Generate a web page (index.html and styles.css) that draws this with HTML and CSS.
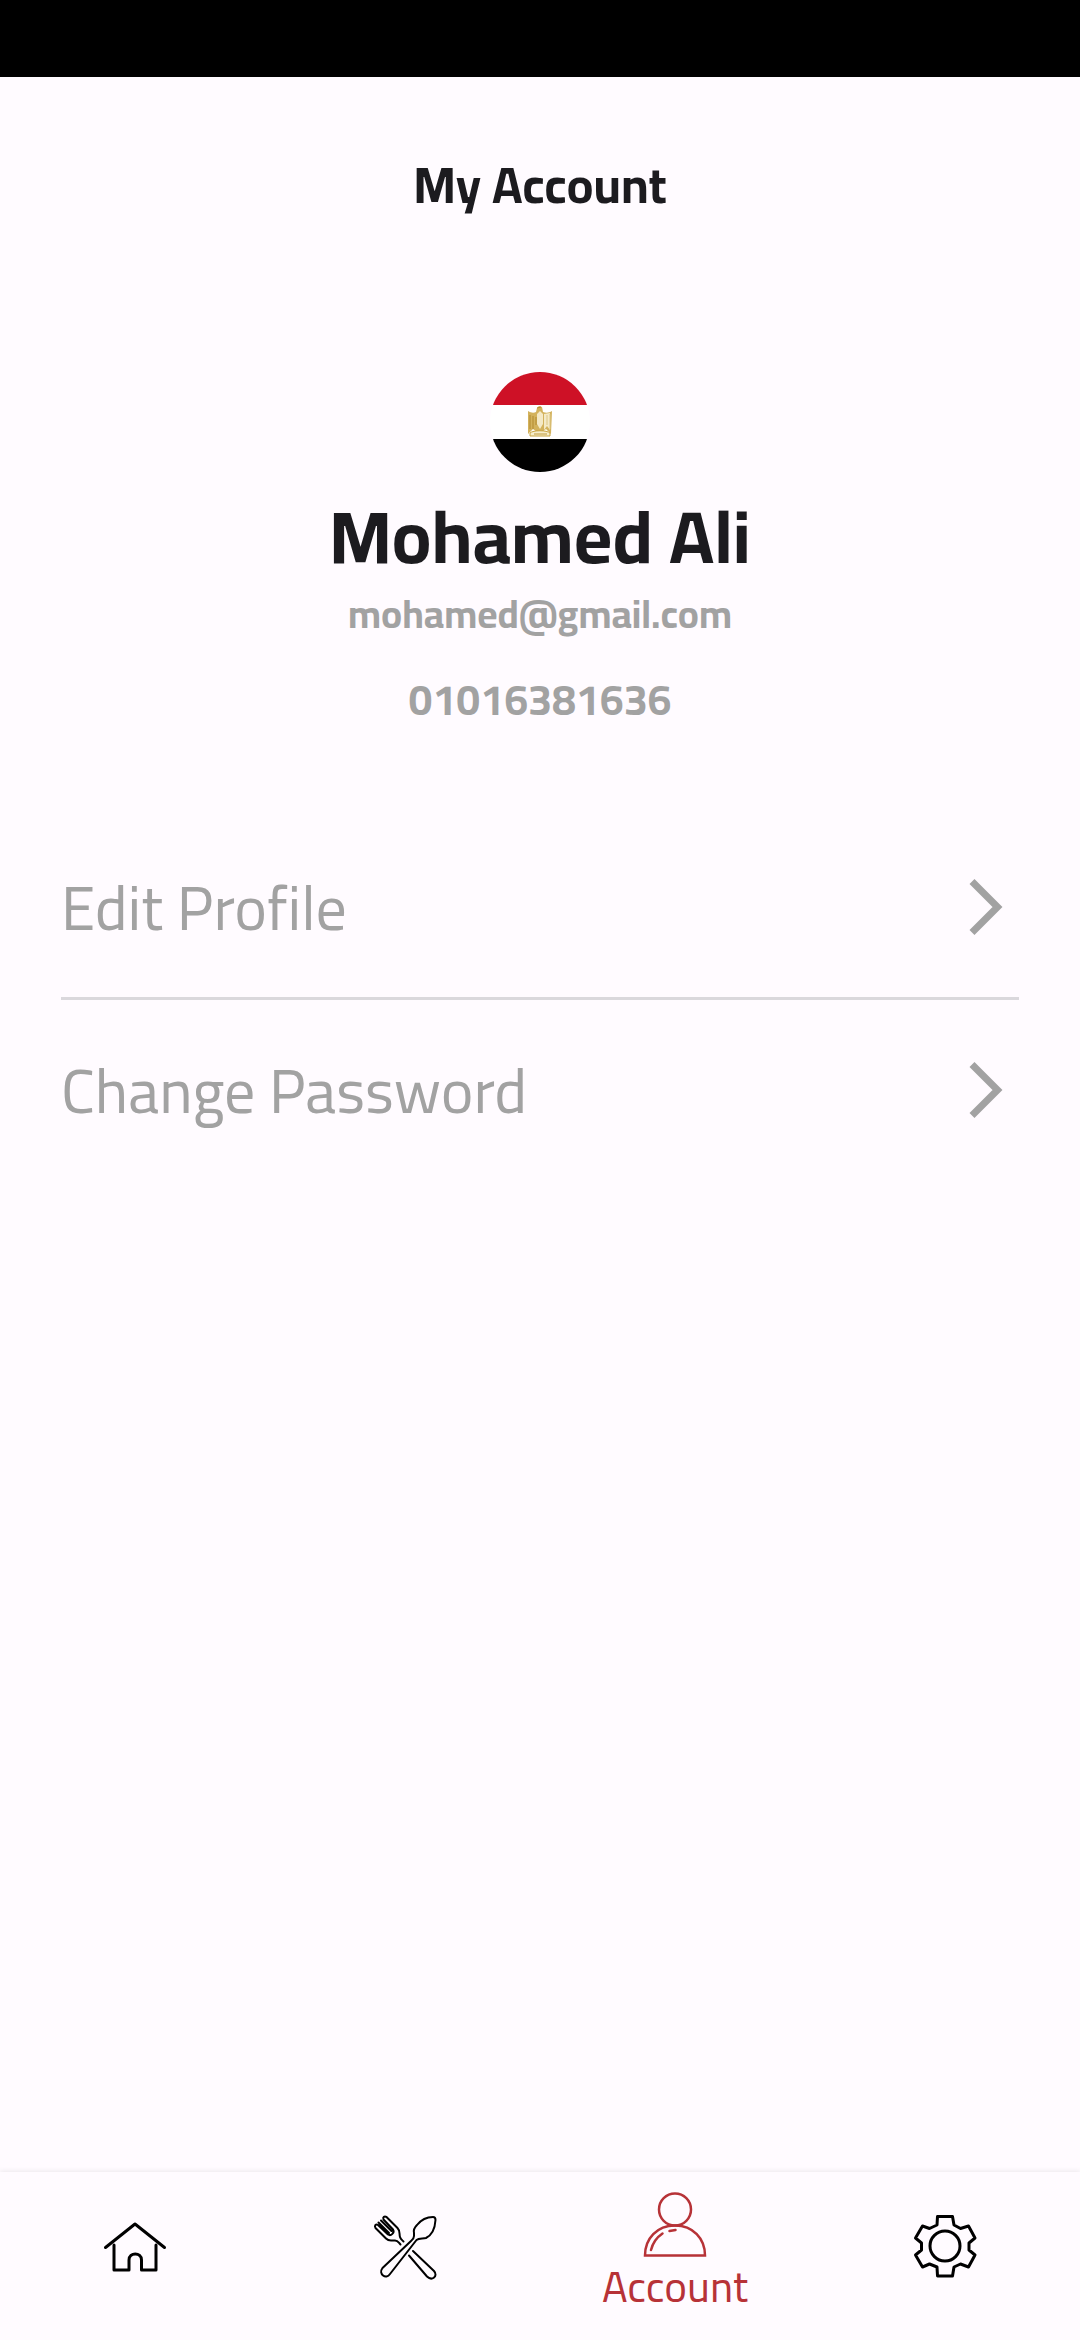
FILE: index.html
```html
<!DOCTYPE html>
<html lang="en">
<head>
<meta charset="utf-8">
<meta name="viewport" content="width=device-width, initial-scale=1">
<title>My Account</title>
<link rel="stylesheet" href="styles.css">
</head>
<body>
<div class="status-bar"></div>
<header class="app-bar"><h1 class="app-title">My Account</h1></header>
<main class="content">
  <section class="profile">
    <svg class="flag" viewBox="0 0 100 100" role="img" aria-label="Egypt">
      <clipPath id="disc"><circle cx="50" cy="50" r="50"/></clipPath>
      <g clip-path="url(#disc)">
        <path fill="#fff" d="M0 0h100v100H0z"/>
        <path fill="#ce1126" d="M0 0h100v33H0z"/>
        <path fill="#000" d="M0 67h100v33H0z"/>
      </g>
      <path fill="#d3b25c" d="M38 39c3 2 6 2 8 1l1-4 2-2 3 1 1 5c3 1 6 1 9-1l-1 23-5-5-4 3h-5l-4-3-5 5z"/>
      <path fill="#f4e9c6" d="M54 42l6-1v17l-3-4-3 4zM47 42l3-3 3 3v10l-3 5-3-5z"/>
      <path stroke="#b28a2e" stroke-width="1" fill="none" d="M40 43v14M43 44v13M47 36l4-1M46 45v8"/>
      <path stroke="#dcc684" stroke-width="1" fill="none" d="M57 43v10M60 42v15"/>
      <path fill="#f6edcb" stroke="#c9a43f" stroke-width="1" d="M40 61c3-3 17-3 20 0v3H40z"/>
      <path stroke="#c09a3b" stroke-width="1" d="M44 62h13"/>
    </svg>
    <h2 class="name">Mohamed Ali</h2>
    <p class="email">mohamed@gmail.com</p>
    <p class="phone">01016381636</p>
  </section>
  <nav class="options" aria-label="Account options">
    <a class="option" href="#edit">Edit Profile
      <svg class="chevron" viewBox="0 0 34 58" aria-hidden="true"><path d="M3 3.500l25.500 25.500L3 54.500"/></svg>
    </a>
    <a class="option" href="#password">Change Password
      <svg class="chevron" viewBox="0 0 34 58" aria-hidden="true"><path d="M3 3.500l25.500 25.500L3 54.500"/></svg>
    </a>
  </nav>
</main>
<nav class="tab-bar" aria-label="Main">
  <a class="tab" href="#home" aria-label="Home">
    <svg class="icon" viewBox="0 0 64 64" stroke-width="3"><path d="M2.500 33.500L32 10l29.500 23.500M11 31v25h15V46c0-8 12.500-8 12.500 0v10H53V31"/></svg>
  </a>
  <a class="tab" href="#menu" aria-label="Menu">
    <svg class="icon" viewBox="0 0 64 64" stroke-width="2"><path d="M41 22v-3c-1-4 1-6 3-8C48 6 54 3 60 3c2 0 2.500 1 2.500 3C62 14 59 21 53 24c-3 1-7 0-9.500 2L17 60c-4 6-12 0-7.500-6L38 27c2-1.500 3-3 3-5"/><path d="M27.500 30.500c-2-2-2.500-4-5.500-4h-4c-3 0-4-1-5-2L2.500 14c-1.500-2.500.5-4.500 2.500-3L15 20.500c3 2 7-2 5-5L10.500 5.500c-1-2.500 1-3.500 3-2.500L24.500 14c3 3 1.500 6 2.500 9 .5 2 2 3 3.500 4.500M5.500 8.500L16 19M8 6.500L18.500 17M40 37l21 20c4.500 5-2 10.500-7 5.500L36 41.500"/></svg>
  </a>
  <a class="tab active" href="#account" aria-current="page">
    <svg class="icon" viewBox="0 0 64 64" stroke-width="2.500"><circle cx="32" cy="16.500" r="16"/><path stroke-linejoin="miter" d="M2 62.500c0-17 12-30 30-30s30 13 30 30z"/><path d="M8 57c2-8 5.500-12.500 11.500-16.500M26.500 38l6-1"/></svg>
    <span class="tab-label">Account</span>
  </a>
  <a class="tab" href="#settings" aria-label="Settings">
    <svg class="icon" viewBox="0 0 64 64" stroke-width="3"><path d="M24.500 2.500h15L41 11l6.500 3.500 8-2.500 6.500 12-6 5v7l6 5-6.500 12-8-3L41 53l-1.500 9h-15L24 53l-7.500-3-7 3L2.500 41l6-5v-7l-6-5 7-12 7 2.500L24 11z"/><circle cx="32" cy="32" r="15"/></svg>
  </a>
</nav>
</body>
</html>
```
FILE: styles.css
```css
* { box-sizing: border-box; }

body {
  margin: 0;
  min-height: 100vh;
  display: flex;
  flex-direction: column;
  background: #fffbff;
  color: #1c1b1f;
  font-family: Cairo, "Titillium Web", "Noto Sans", sans-serif;
}

h1, h2, p { margin: 0; }
a { color: inherit; text-decoration: none; }

.status-bar { height: 77px; background: #000; }

.app-bar {
  height: 216px;
  display: flex;
  align-items: center;
  justify-content: center;
}

.app-title { font-size: 50px; line-height: 64px; font-weight: 700; }

.content { flex: 1; padding: 79px 61px 0; }

.profile {
  display: flex;
  flex-direction: column;
  align-items: center;
  text-align: center;
}

.flag { width: 100px; height: 100px; }
.name { margin-top: 16px; font-size: 74px; line-height: 96px; font-weight: 700; }
.email { font-size: 39px; line-height: 60px; font-weight: 700; color: #a2a2a2; }
.phone { margin-top: 26px; font-size: 43px; line-height: 60px; font-weight: 700; color: #a2a2a2; }

.options { margin-top: 87px; }

.option {
  height: 180px;
  padding-right: 16px;
  display: flex;
  align-items: center;
  justify-content: space-between;
  font-size: 62px;
  line-height: 80px;
  color: #a2a2a2;
}

.option + .option { height: 183px; border-top: 3px solid #dad8dc; }

.chevron {
  width: 34px;
  height: 58px;
  fill: none;
  stroke: #a2a2a2;
  stroke-width: 7;
}

.tab-bar {
  height: 168px;
  display: grid;
  grid-template-columns: repeat(4, 1fr);
  background: #fffbff;
  box-shadow: 0 -1px 5px rgba(0, 0, 0, 0.08);
}

.tab {
  padding-bottom: 20px;
  display: flex;
  flex-direction: column;
  align-items: center;
  justify-content: center;
  color: #000;
}

.active { padding-bottom: 6px; color: #b73237; }
.tab-label { margin-top: 4px; font-size: 43px; line-height: 52px; }

.icon {
  width: 64px;
  height: 64px;
  overflow: visible;
  fill: none;
  stroke: currentColor;
  stroke-linecap: round;
  stroke-linejoin: round;
}
```
